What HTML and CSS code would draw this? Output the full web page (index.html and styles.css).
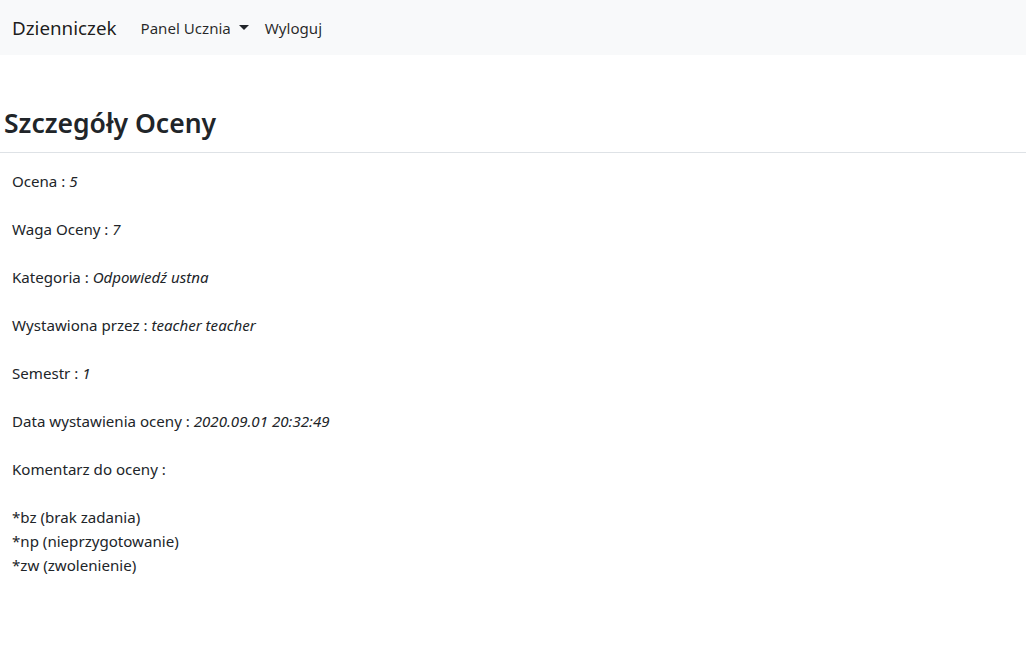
FILE: index.html
```html
<!DOCTYPE html>
<html lang="pl">
<head>
<meta charset="utf-8">
<link rel="stylesheet" href="styles.css">
</head>
<body>
<nav class="navbar">
  <a class="brand">Dzienniczek</a>
  <ul class="nav">
    <li class="nav-item"><a class="nav-link">Panel Ucznia<span class="caret"></span></a></li>
    <li class="nav-item"><a class="nav-link">Wyloguj</a></li>
  </ul>
</nav>
<main class="page">
  <h2 class="title">Szczegóły Oceny</h2>
  <hr class="divider">
  <section class="details">
    <p class="row">Ocena : <i>5</i></p>
    <p class="row">Waga Oceny : <i>7</i></p>
    <p class="row">Kategoria : <i>Odpowiedź ustna</i></p>
    <p class="row">Wystawiona przez : <i>teacher teacher</i></p>
    <p class="row">Semestr : <i>1</i></p>
    <p class="row">Data wystawienia oceny : <i>2020.09.01 20:32:49</i></p>
    <p class="row">Komentarz do oceny : </p>
    <p class="legend">*bz (brak zadania)<br>*np (nieprzygotowanie)<br>*zw (zwolenienie)</p>
  </section>
</main>
</body>
</html>
```
FILE: styles.css
```css
html, body {
  margin: 0;
  padding: 0;
  background: #fff;
}
body {
  font-family: "Noto Sans", "Open Sans", sans-serif;
  font-size: 15.1px;
  line-height: 24px;
  color: #212529;
}
.navbar {
  height: 55px;
  box-sizing: border-box;
  background: #f8f9fa;
  display: flex;
  align-items: center;
  padding: 0 12px;
}
.brand {
  font-size: 18.8px;
  line-height: 30px;
  color: rgba(0,0,0,.9);
  margin-right: 16px;
}
.nav {
  list-style: none;
  margin: 0;
  padding: 0;
  display: flex;
}
.nav-link {
  display: flex;
  align-items: center;
  padding: 8px;
  color: rgba(0,0,0,.85);
}
.caret {
  display: inline-block;
  margin-left: 8px;
  width: 0;
  height: 0;
  border-top: 5px solid #212529;
  border-left: 5px solid transparent;
  border-right: 5px solid transparent;
}
.page {
  padding-top: 49px;
}
.title {
  margin: 0 0 0 4px;
  font-size: 26.5px;
  line-height: 38px;
  font-weight: 600;
}
.divider {
  margin: 10px 0 0 0;
  border: 0;
  border-top: 1px solid #dee2e6;
}
.details {
  padding: 16px 12px 0;
}
.row {
  margin: 0 0 24px 0;
}
.legend {
  margin: 0;
}
```
